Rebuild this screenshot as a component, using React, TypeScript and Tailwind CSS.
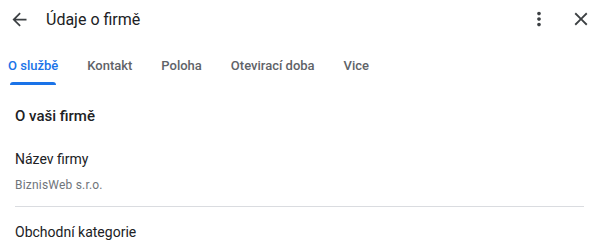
const tabs = ["O službě", "Kontakt", "Poloha", "Otevirací doba", "Vice"];

function Icon({ d, className }: { d: string; className?: string }) {
  return (
    <svg viewBox="0 0 24 24" className={className} fill="currentColor">
      <path d={d} />
    </svg>
  );
}

export default function App() {
  return (
    <div className="h-[242px] w-[600px] overflow-hidden bg-white font-['Roboto',_'Liberation_Sans',_sans-serif] text-[#202124]">
      <header className="flex h-[38px] items-center pr-[7px]">
        <button className="flex h-[38px] w-[38px] items-center justify-center text-[#3c4043]">
          <Icon className="h-[21px] w-[21px]" d="M20 11H7.83l5.59-5.59L12 4l-8 8 8 8 1.41-1.41L7.83 13H20v-2z" />
        </button>
        <h1 className="ml-[8px] text-[16px] leading-[20px] mt-[2px]">Údaje o firmě</h1>
        <div className="flex-1" />
        <button className="flex h-[24px] w-[24px] items-center justify-center text-[#3c4043]">
          <Icon className="h-[22px] w-[22px]" d="M12 8c1.1 0 2-.9 2-2s-.9-2-2-2-2 .9-2 2 .9 2 2 2zm0 2c-1.1 0-2 .9-2 2s.9 2 2 2 2-.9 2-2-.9-2-2-2zm0 6c-1.1 0-2 .9-2 2s.9 2 2 2 2-.9 2-2-.9-2-2-2z" />
        </button>
        <button className="ml-[18px] flex h-[24px] w-[24px] items-center justify-center text-[#3c4043]">
          <Icon className="h-[22px] w-[22px]" d="M19 6.41L17.59 5 12 10.59 6.41 5 5 6.41 10.59 12 5 17.59 6.41 19 12 13.41 17.59 19 19 17.59 13.41 12z" />
        </button>
      </header>

      <nav className="flex gap-[29px] pl-[8px]">
        {tabs.map((t, i) => (
          <div
            key={t}
            className={`relative h-[47px] pt-[20px] text-[13px] font-medium leading-[16px] ${
              i === 0 ? "text-[#1a73e8]" : "text-[#5f6368]"
            }`}
          >
            {t}
            {i === 0 && (
              <span className="absolute inset-x-[2px] bottom-0 h-[3px] rounded-t-[3px] bg-[#1a73e8]" />
            )}
          </div>
        ))}
      </nav>

      <section className="pl-[15px] pr-[16px]">
        <h2 className="mt-[21px] text-[15px] font-medium leading-[20px]">O vaši firmě</h2>
        <div className="mt-[23px] text-[14px] leading-[20px]">Název firmy</div>
        <div className="mt-[8px] text-[12px] leading-[16px] tracking-[0.2px] text-[#70757a]">BiznisWeb s.r.o.</div>
        <div className="mt-[13px] h-px bg-[#dadce0]" />
        <div className="mt-[15px] text-[14px] leading-[20px]">Obchodní kategorie</div>
      </section>
    </div>
  );
}
